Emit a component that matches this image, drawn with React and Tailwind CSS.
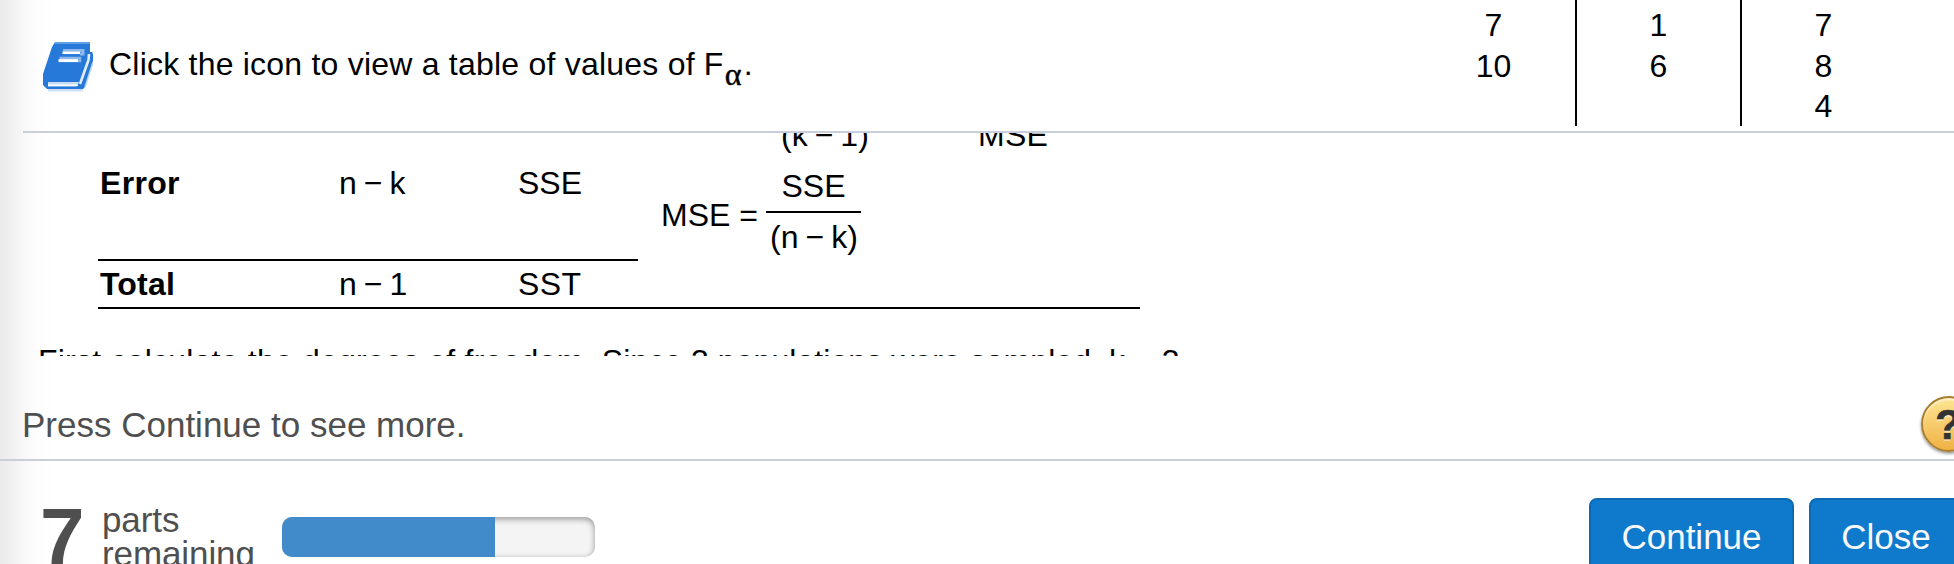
import React from "react";

function Minus() {
  return <span className="mx-[7px]">−</span>;
}

function BookIcon() {
  return (
    <svg viewBox="0 0 50 50" className="h-[50px] w-[50px] shrink-0">
      <path d="M5 46 H40 V49.500 H5 Z" fill="#cfdff6" />
      <path d="M12 0 H47 V10 H49 L50 12 V20 L42 45 L40 47 H4 L0 43 V32 L9 5 Z" fill="#2679d9" />
      <path d="M12 1 H47" stroke="#5f9ee5" strokeWidth="2" />
      <path d="M5 40 H36 L34 44.500 H5 Z" fill="#c9dcf6" />
      <path d="M5 43.200 H35" stroke="#fff" strokeWidth="1.500" />
      <path d="M46 12 L45.500 18 L37 42" fill="none" stroke="#e3edfb" strokeWidth="2.600" />
      <path d="M50 20 L42 45" fill="none" stroke="#b8d2f4" strokeWidth="1.500" />
      <path d="M20 8.500 H40 V12 H37" fill="none" stroke="#8db8ec" strokeWidth="3" />
      <path d="M19.500 10.800 H37" stroke="#fff" strokeWidth="2.500" />
      <path d="M16.500 16 H37 V19 H35" fill="none" stroke="#8db8ec" strokeWidth="2.500" />
      <path d="M15.500 18.600 H35" stroke="#fff" strokeWidth="3" />
    </svg>
  );
}

function DataTable() {
  const columns = [["7", "10"], ["1", "6"], ["7", "8", "4"]];
  return (
    <div className="mr-[48px] flex h-[126px]">
      {columns.map((values, i) => (
        <div
          key={i}
          className={
            "pt-[5px] text-center leading-[40.5px] " +
            (i < 2 ? "w-[165px] border-r-2 border-black" : "w-[164px] pr-[1px]")
          }
        >
          {values.map((v) => (
            <div key={v}>{v}</div>
          ))}
        </div>
      ))}
    </div>
  );
}

function Solution() {
  return (
    <div className="ml-[23px] h-[225px] overflow-hidden border-t-2 border-[#c9cedc]">
      <div className="-mt-[18px] ml-[75px] w-[1042px] leading-[40px]">
        <div className="flex h-[40px]">
          <div className="ml-[683px] w-[197px]">(k<Minus />1)</div>
          <div className="tracking-[0.3px]">MSE</div>
        </div>
        <div className="flex h-[106px]">
          <div className="flex w-[540px] border-b-2 border-black pt-2">
            <div className="w-[241px] pl-[2px] font-bold tracking-[0.3px]">Error</div>
            <div className="w-[179px]">n<Minus />k</div>
            <div>SSE</div>
          </div>
          <div className="flex pt-[11px] pl-[23px]">
            <div className="w-[105px] pt-[29px]">MSE =</div>
            <div className="w-[95px] text-center">
              <div className="h-[47px] border-b-2 border-black">SSE</div>
              <div className="pt-1 pl-[1px]">(n<Minus />k)</div>
            </div>
          </div>
        </div>
        <div className="flex h-[48px] border-b-2 border-black pt-[3px]">
          <div className="w-[241px] pl-[2px] font-bold tracking-[0.2px]">Total</div>
          <div className="w-[179px]">n<Minus />1</div>
          <div className="tracking-[0.4px]">SST</div>
        </div>
      </div>
      <p className="mt-[32px] ml-[15px] leading-[40px] whitespace-nowrap">
        <span className="tracking-[0.22px]">First calculate the degrees of freedom. </span>
        <span className="tracking-[0.06px]">Since 3 populations were sampled, k = 3.</span>
      </p>
    </div>
  );
}

export default function App() {
  return (
    <div className="relative flex h-[564px] w-[1954px] flex-col overflow-hidden bg-white bg-[linear-gradient(to_right,#eaeaea_0px,#efefef_10px,#f8f8f8_24px,#fdfdfd_38px,#ffffff_56px)] font-['Liberation_Sans',Arial,sans-serif] text-[32px] text-black">
      <div className="flex h-[131px] shrink-0 justify-between">
        <div className="flex pt-[42px] pl-[43px]">
          <BookIcon />
          <p className="mt-[2px] ml-[16px] h-[40px] leading-[40px] tracking-[0.22px] whitespace-nowrap">
            Click the icon to view a table of values of F
            <span className="relative top-[10px] ml-[1px] font-['Liberation_Serif',serif] text-[32px] leading-none [-webkit-text-stroke:0.4px_black]">α</span>
            <span className="ml-[2px]">.</span>
          </p>
        </div>
        <DataTable />
      </div>

      <Solution />

      <div className="flex h-[105px] shrink-0 justify-between border-b-2 border-[#c9cedc]">
        <p className="mt-[49px] ml-[22px] text-[35px] leading-[40px] text-[#4f4f4f]">Press Continue to see more.</p>
        <button className="mt-[40px] -mr-[23px] flex h-[56px] w-[56px] items-center justify-center rounded-full border-2 border-[#a87f30] bg-linear-to-b from-[#fde692] to-[#f0b143] pt-[2px] pr-[2px] text-[42px] leading-none font-bold text-[#333] shadow-[0_2px_3px_rgba(0,0,0,0.4),inset_0_2px_2px_rgba(255,255,255,0.6)] [-webkit-text-stroke:0.7px_#333] [text-shadow:0_2px_0_rgba(255,255,255,0.5)]">
          ?
        </button>
      </div>

      <div className="flex h-[103px] shrink-0 overflow-hidden text-[#4f4f4f]">
        <div className="mt-[31px] ml-[40px] w-[62px] text-[80px] leading-[90px] font-bold">7</div>
        <div className="mt-[42px] w-[180px] text-[35px] leading-[34px] tracking-[-0.1px]">
          parts
          <br />
          remaining
        </div>
        <div className="mt-[56px] h-[40px] w-[313px] shrink-0 overflow-hidden rounded-[10px] bg-[#f4f4f4] shadow-[inset_0_2px_6px_rgba(0,0,0,0.4)]">
          <div className="h-full w-[213px] bg-[#418bca]" />
        </div>
        <div className="ml-auto -mr-[10px] flex shrink-0 gap-[15px] pt-[37px] text-[35px] leading-[40px] text-[#f7f9fc]">
          <button className="h-[80px] w-[205px] rounded-[8px] border-2 border-[#0c69b2] bg-[#0f79cb] pb-[2px]">Continue</button>
          <button className="h-[80px] w-[155px] rounded-[8px] border-2 border-[#0c69b2] bg-[#0f79cb] pr-[1px] pb-[2px]">Close</button>
        </div>
      </div>
    </div>
  );
}
